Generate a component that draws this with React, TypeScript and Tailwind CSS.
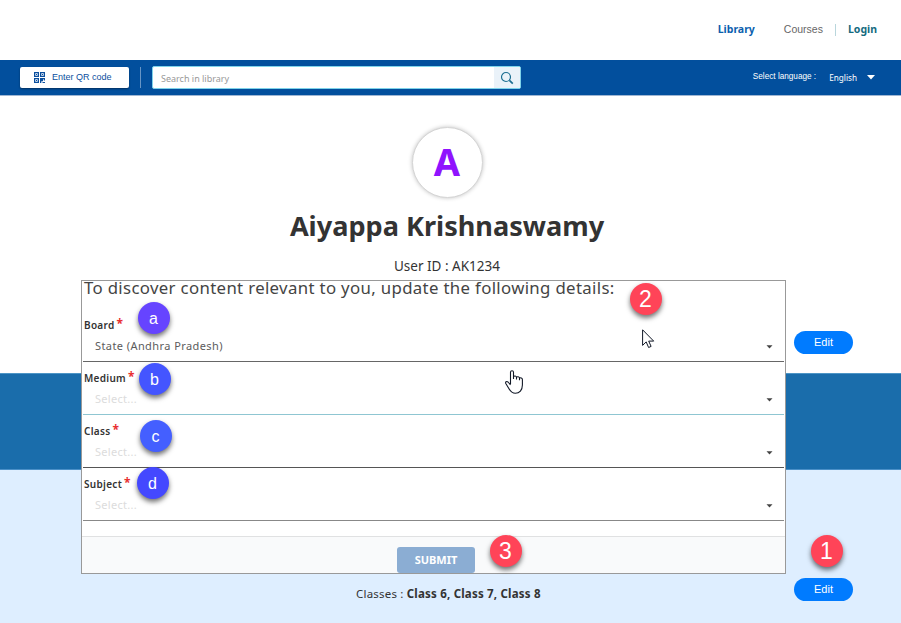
import React from "react";

const noto = "font-['Noto_Sans',sans-serif]";
const arial = "font-['Liberation_Sans',sans-serif]";

function QrIcon() {
  return (
    <svg width="11" height="11" viewBox="0 0 11 11" fill="#0b4f9e" fillRule="evenodd" className="mr-[7px]">
      <path d="M0 0h5v5H0zM1.3 1.3v2.4h2.4V1.3zM6 0h5v5H6zM7.3 1.3v2.4h2.4V1.3zM0 6h5v5H0zM1.3 7.3v2.4h2.4V7.3z" />
      <path d="M2 2h1v1H2zM8 2h1v1H8zM2 8h1v1H2zM6 6h5v2.5H9.800V7.3H9v2H7.3V11H6zM8.5 10H11v1H8.5z" />
    </svg>
  );
}

function Edit() {
  return (
    <button className={`flex h-[23px] w-[59px] items-center justify-center rounded-full bg-[#007bff] pb-px text-[11px] text-white ${arial}`}>
      Edit
    </button>
  );
}

type FieldProps = { label: string; value?: string; line: string };

function Field({ label, value, line }: FieldProps) {
  return (
    <div className={`mx-[1px] flex h-[53px] flex-col border-b ${line}`}>
      <div className="mt-[8px] flex h-[16px] items-center pl-px text-[10px] leading-[16px] font-semibold tracking-[0.3px] text-[#333]">
        {label}
        <span className="-mt-[2px] ml-[2px] text-[12px] font-bold text-[#e83030]">*</span>
      </div>
      <div className="mt-[5px] flex h-[16px] items-center justify-between pr-[11px] pl-[12px] text-[11px] leading-[16px]">
        {value ? (
          <span className="tracking-[0.42px] text-[#5c5c5c]">{value}</span>
        ) : (
          <span className="tracking-[0.3px] text-[#dcdcdc]">Select...</span>
        )}
        <svg className="mt-px" width="7" height="4" viewBox="0 0 7 4" fill="#444">
          <path d="M.5.3h6l-3 3.2z" />
        </svg>
      </div>
    </div>
  );
}

type BadgeProps = { text: string; className: string };

function Badge({ text, className }: BadgeProps) {
  return (
    <div className={`absolute flex size-[32px] items-center justify-center rounded-full text-white shadow-[0_3px_5px_rgba(0,0,0,0.55)] ${arial} ${className}`}>
      {text}
    </div>
  );
}

export default function App() {
  return (
    <div className={`relative flex h-[623px] w-[901px] flex-col overflow-hidden bg-white whitespace-nowrap ${noto}`}>
      <header className="flex h-[60px] shrink-0 items-center justify-end pr-[24px] text-[10.5px]">
        <a className="font-bold text-[#0b5fae]">Library</a>
        <a className={`ml-[29px] text-[10.5px] text-[#666] ${arial}`}>Courses</a>
        <span className="ml-[12px] h-[12px] w-px bg-[#b9d6dc]" />
        <a className="ml-[12px] font-bold text-[#146b80]">Login</a>
      </header>

      <nav className="flex h-[36px] shrink-0 items-center border-b border-[#9fb6d3] bg-[#024f9d] pl-[20px]">
        <button className={`flex h-[21px] w-[109px] items-center rounded-[2px] bg-white pl-[14px] text-[9px] text-[#0b4f9e] shadow-[0_1px_2px_rgba(0,0,0,0.4)] ${arial}`}>
          <QrIcon />
          <span>Enter QR code</span>
        </button>
        <span className="ml-[11px] h-[21px] w-px bg-[#6795c5]" />
        <div className="ml-[11px] flex h-[23px] w-[369px] overflow-hidden rounded-[2px] border border-[#7fd3ea] bg-white">
          <span className="flex flex-1 items-center pt-[2px] pl-[8px] text-[9px] text-[#999]">Search in library</span>
          <span className="flex w-[26px] items-center justify-center bg-[#eaf2f9]">
            <svg width="14" height="14" viewBox="0 0 14 14" fill="none" stroke="#1d6f92" strokeWidth="1.2">
              <circle cx="6" cy="6" r="4.5" />
              <path d="M9.4 9.4l3.4 3.2" strokeWidth="1.7" />
            </svg>
          </span>
        </div>
        <span className={`ml-auto text-[8.2px] text-white ${arial}`}>Select language :</span>
        <span className="ml-[13px] pt-[2px] text-[8.2px] text-white">English</span>
        <svg className="mr-[26px] ml-[10px]" width="8" height="5" viewBox="0 0 8 5" fill="#fff">
          <path d="M0 0h8L4 4.6z" />
        </svg>
      </nav>

      <section className="flex h-[277px] shrink-0 flex-col items-center pr-[7px]">
        <div className="mt-[31px] flex size-[71px] items-center justify-center rounded-full border border-[#d5d5d5] bg-white pb-[2px] text-[38px] font-bold text-[#9013fe] shadow-[0_0_4px_rgba(0,0,0,0.25)]">
          A
        </div>
        <h1 className="mt-[8px] text-[27.1px] leading-[39px] font-bold text-[#333]">Aiyappa Krishnaswamy</h1>
        <p className="mt-[11px] text-[13.5px] leading-[20px] text-[#333]">User ID : AK1234</p>
        <div className="mt-[55px] mr-[41px] self-end">
          <Edit />
        </div>
      </section>
      <section className="h-[97px] shrink-0 border-y border-t-[#4d95c6] border-b-[#4a90c8] bg-[#1a6dab]" />
      <section className="flex flex-1 items-start bg-[#deeeff] pt-[108px] pl-[356px]">
        <p className="pt-[7px] text-[11.5px] leading-[18px] tracking-[0.2px] text-[#333]">
          Classes : <b>Class 6, Class 7, Class 8</b>
        </p>
        <div className="mr-[48px] ml-auto">
          <Edit />
        </div>
      </section>

      <div role="dialog" className="absolute top-[280px] left-[81px] flex h-[294px] w-[705px] flex-col border border-[#999] bg-white">
        <h2 className="h-[28px] pl-[2px] text-[16.8px] leading-[14px] tracking-[0.34px] text-[#444]">
          To discover content relevant to you, update the following details:
        </h2>
        <Field label="Board" value="State (Andhra Pradesh)" line="border-[#666]" />
        <Field label="Medium" line="border-[#8fc6d2]" />
        <Field label="Class" line="border-[#555]" />
        <Field label="Subject" line="border-[#888]" />
        <footer className="mt-[15px] flex flex-1 items-end justify-center border-t border-[#e0e1e2] bg-[#f9fafb] pl-[5px]">
          <button className="h-[26px] w-[78px] rounded-[3px] bg-[#8badd3] text-[11px] font-bold text-white">SUBMIT</button>
        </footer>
      </div>

      <Badge text="a" className="top-[302px] left-[137.5px] bg-[#6644ff] pt-px text-[16px]" />
      <Badge text="b" className="top-[363px] left-[138.5px] bg-[#4455ff] pt-px text-[16px]" />
      <Badge text="c" className="top-[420px] left-[139.5px] bg-[#445fff] pt-px text-[16px]" />
      <Badge text="d" className="top-[467px] left-[136.5px] bg-[#4448ff] pt-px text-[16px]" />
      <Badge text="2" className="top-[283px] left-[629.5px] bg-[#ff4458] text-[23px]" />
      <Badge text="3" className="top-[535px] left-[489.5px] bg-[#ff4458] text-[23px]" />
      <Badge text="1" className="top-[535px] left-[810.5px] bg-[#ff4458] text-[23px]" />

      <svg className="absolute top-[329px] left-[642px]" width="13" height="20" viewBox="0 0 13 20" fill="#fff" stroke="#111827" strokeWidth="1">
        <path d="M.6.8v15.6l3.6-3.5 2.4 5.6 2.5-1.1-2.4-5.3h5z" />
      </svg>
      <svg className="absolute top-[370px] left-[505px]" width="19" height="25" viewBox="0 0 19 25" fill="#fff" stroke="#111827" strokeWidth="1.1" strokeLinejoin="round">
        <path d="M5.5 14V2.3C5.5.3 8.5.3 8.5 2.3V9M8.5 6.8c.5-1.3 3-1 3 .7v2M11.5 7.3c.5-1 3-.7 3 .9v2M14.5 8.2c1-.8 2.9-.3 2.9 1.3V15c0 5-3 8.3-7 8.3-3.6 0-5-2-6.4-4.5L.8 13.5c-.7-1.500.8-2.600 2.200-1.500l2.500 2.800" />
      </svg>
    </div>
  );
}
